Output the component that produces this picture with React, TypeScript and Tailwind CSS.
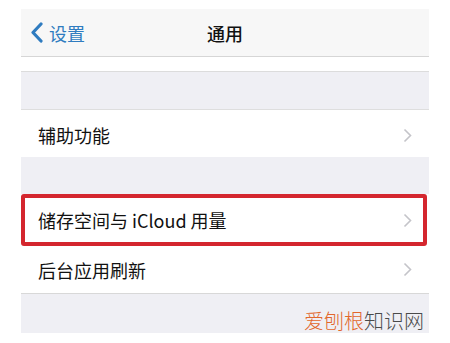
import React from 'react';

const font = { fontFamily: '"Noto Sans CJK SC", "Noto Sans", sans-serif' };

const Chevron = (): JSX.Element => (
  <svg width="9" height="15" viewBox="0 0 9 15" className="shrink-0">
    <polyline points="1.5,1.5 7.5,7.5 1.5,13.5" fill="none" stroke="#c4c4c9" strokeWidth="1.6" />
  </svg>
);

const Row = ({ label, className = '' }: { label: string; className?: string }): JSX.Element => (
  <div className={`flex items-center justify-between bg-white ${className}`}>
    <span className="text-[18px] leading-none text-[#111]">{label}</span>
    <Chevron />
  </div>
);

export default function App(): JSX.Element {
  return (
    <div className="h-[343px] w-[450px] overflow-hidden bg-white px-[21px] pt-[9px]" style={font}>
      <div className="flex flex-col">
        <div className="relative flex h-[48px] items-center border-b border-[#d6d6d6] bg-[#f7f7f7]">
          <div className="flex items-center gap-[6px] pl-[9px] text-[#2f7cc0]">
            <svg width="13" height="21" viewBox="0 0 13 21">
              <polyline points="11,2 3,10.5 11,19" fill="none" stroke="#2f7cc0" strokeWidth="3.2" strokeLinecap="round" strokeLinejoin="round" />
            </svg>
            <span className="text-[18px] leading-none">设置</span>
          </div>
          <span className="absolute left-1/2 -translate-x-1/2 text-[18px] font-medium leading-none text-[#111]">
            通用
          </span>
        </div>
        <div className="h-[15px] border-b border-[#dcdcdc] bg-white" />
        <div className="h-[38px] border-b border-[#dedede] bg-[#efeff4]" />
        <Row label="辅助功能" className="h-[47px] pl-[17px] pr-[17px] pt-[3px]" />
        <div className="h-[37px] bg-[#efeff4]" />
        <div className="mr-[2px] rounded-[3px] border-[4px] border-[#d4262e]">
          <Row label="储存空间与 iCloud 用量" className="h-[44px] pl-[13px] pr-[11px]" />
        </div>
        <Row label="后台应用刷新" className="h-[48px] border-b border-[#d8d8d8] pl-[17px] pr-[17px]" />
        <div className="flex h-[39px] items-end justify-end bg-[#efeff4] pr-[5px]">
          <span className="mb-[2px] text-[20px] font-light leading-none">
            <span className="text-[#e2672c]">爱刨根</span>
            <span className="text-[#4a4a4a]">知识网</span>
          </span>
        </div>
      </div>
    </div>
  );
}
